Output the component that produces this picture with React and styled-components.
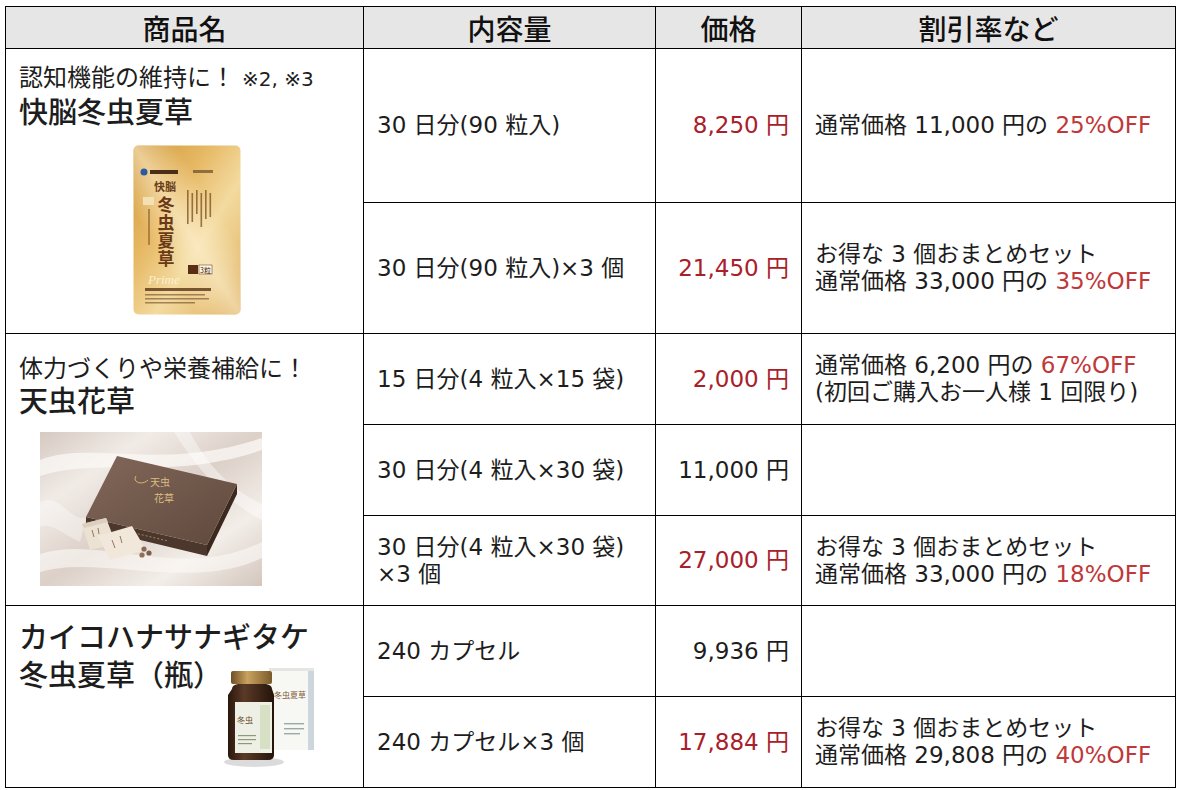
import React from 'react';
import styled, { createGlobalStyle } from 'styled-components';

const GlobalStyle = createGlobalStyle`
  html, body {
    margin: 0;
    padding: 0;
    background: #fff;
  }
  body {
    font-family: "DejaVu Sans", "Noto Sans CJK JP", sans-serif;
    color: #1d1d1d;
  }
`;

const Sheet = styled.div`
  padding: 6px 0 0 5px;
`;

const Table = styled.table`
  border-collapse: collapse;
  table-layout: fixed;
  width: 1170px;
`;

const Col = styled.col`
  width: ${p => p.$w}px;
`;

const Row = styled.tr`
  height: ${p => p.$h}px;
`;

const HeadCell = styled.th`
  background: #e7e6e6;
  border: 1px solid #000;
  padding: 0;
  text-align: center;
  font-family: "Noto Sans CJK JP", sans-serif;
  font-size: 28px;
  font-weight: 500;
  color: #111;
`;

const Cell = styled.td`
  border: 1px solid #000;
  padding: 0 13px;
  font-size: 23px;
  line-height: 27px;
  vertical-align: middle;
  white-space: nowrap;
`;

const ProductCell = styled(Cell)`
  vertical-align: top;
  padding: ${p => p.$pad}px 0 0 13px;
`;

const PriceCell = styled(Cell)`
  text-align: right;
  padding-right: 12px;
  color: ${p => (p.$red ? '#a8202a' : '#1d1d1d')};
`;

const Off = styled.span`
  color: #c0383a;
`;

const Catch = styled.div`
  font-family: "Noto Sans CJK JP", sans-serif;
  font-size: 24px;
  line-height: 28px;
`;

const Note = styled.span`
  margin-left: 7px;
  font-family: "DejaVu Sans", "Noto Sans CJK JP", sans-serif;
  font-size: 20px;
`;

const Name = styled.div`
  margin-top: ${p => p.$top || 0}px;
  font-family: "Noto Sans CJK JP", sans-serif;
  font-size: 29px;
  font-weight: 500;
  line-height: ${p => p.$lh || 32}px;
`;

const NameRow = styled.div`
  display: flex;
  align-items: flex-start;
`;

const Art = styled.div`
  display: flex;
  margin: ${p => p.$m};
  line-height: 0;
`;

const PouchArt = () => (
  <svg width="108" height="170" viewBox="0 0 108 170">
    <defs>
      <linearGradient id="pouchGold" x1="0" y1="0" x2="1" y2="1">
        <stop offset="0" stopColor="#d09638" />
        <stop offset="0.35" stopColor="#e6b965" />
        <stop offset="0.6" stopColor="#f3da9f" />
        <stop offset="0.8" stopColor="#e9c57e" />
        <stop offset="1" stopColor="#d7a24d" />
      </linearGradient>
      <linearGradient id="pouchSheen" x1="1" y1="0" x2="0" y2="1">
        <stop offset="0.3" stopColor="#fff6dc" stopOpacity="0" />
        <stop offset="0.5" stopColor="#fff6dc" stopOpacity="0.55" />
        <stop offset="0.7" stopColor="#fff6dc" stopOpacity="0" />
      </linearGradient>
    </defs>
    <rect x="0.5" y="0.5" width="107" height="169" rx="5" fill="url(#pouchGold)" />
    <rect x="0.5" y="0.5" width="107" height="169" rx="5" fill="url(#pouchSheen)" />
    <circle cx="11" cy="27" r="3.5" fill="#2d5c9e" />
    <rect x="17" y="25" width="28" height="4" fill="#4a2e16" />
    <rect x="60" y="25" width="20" height="3" fill="#6b4a28" opacity="0.7" />
    <text x="21" y="46" fontSize="11" fontWeight="700" fill="#6b3e18" fontFamily="'Noto Sans CJK JP', sans-serif">快脳</text>
    <rect x="10" y="52" width="11" height="8" fill="#f3e0b4" />
    <rect x="15" y="64" width="2" height="36" fill="#8a5a2a" opacity="0.6" />
    <text x="33" y="51" fontSize="17" fontWeight="700" letterSpacing="1" fill="#6a3a16" fontFamily="'Noto Sans CJK JP', sans-serif" style={{ writingMode: 'vertical-rl' }}>冬虫夏草</text>
    {[0, 1, 2, 3, 4, 5].map(i => (
      <rect key={i} x={54 + i * 4.5} y={45 + (i % 2) * 3} width="1.6" height={34 - (i % 3) * 5} fill="#7a4c22" opacity="0.75" />
    ))}
    <text x="15" y="139" fontSize="13" fontStyle="italic" fill="#fbefd0" fontFamily="'Liberation Serif', serif">Prime</text>
    <rect x="55" y="120" width="10" height="9" fill="#5a2e14" />
    <rect x="66" y="120" width="13" height="9" fill="#fff8ea" stroke="#7a4c22" strokeWidth="0.6" />
    <text x="72.5" y="127.5" fontSize="7" textAnchor="middle" fill="#3a2010" fontFamily="'Noto Sans CJK JP', sans-serif">3粒</text>
    <rect x="12" y="143" width="66" height="3" fill="#5a3418" opacity="0.8" />
    <rect x="12" y="149" width="60" height="1.5" fill="#6b4a28" opacity="0.6" />
    <rect x="12" y="153" width="64" height="1.5" fill="#6b4a28" opacity="0.6" />
    <rect x="12" y="157" width="50" height="1.5" fill="#6b4a28" opacity="0.6" />
  </svg>
);

const GiftBoxArt = () => (
  <svg width="222" height="154" viewBox="0 0 222 154">
    <defs>
      <linearGradient id="satin" x1="0" y1="0" x2="1" y2="1">
        <stop offset="0" stopColor="#d6cac2" />
        <stop offset="0.25" stopColor="#f1ebe6" />
        <stop offset="0.5" stopColor="#dcd0c8" />
        <stop offset="0.75" stopColor="#f3eee9" />
        <stop offset="1" stopColor="#d3c6bd" />
      </linearGradient>
      <linearGradient id="lid" x1="0" y1="0" x2="1" y2="1">
        <stop offset="0" stopColor="#82685b" />
        <stop offset="1" stopColor="#5f483c" />
      </linearGradient>
    </defs>
    <rect width="222" height="154" fill="url(#satin)" />
    <path d="M0 28 C50 8 120 40 222 6 L222 18 C130 50 60 24 0 44 Z" fill="#fbf8f5" opacity="0.75" />
    <path d="M0 122 C60 102 140 150 222 110 L222 126 C150 160 60 122 0 140 Z" fill="#fbf8f5" opacity="0.65" />
    <path d="M150 0 C170 40 200 62 222 72 L222 88 C190 72 160 42 134 0 Z" fill="#fff" opacity="0.4" />
    <path d="M0 70 C20 60 30 90 46 86 L40 110 C20 100 10 90 0 95 Z" fill="#fff" opacity="0.35" />
    <polygon points="46,85 167,113 167,124 46,95" fill="#4c372c" />
    <polygon points="167,113 197,52 197,62 167,124" fill="#3b291f" />
    <polygon points="77,24 197,52 167,113 46,85" fill="url(#lid)" />
    <path d="M96 44 C92 50 102 54 108 48" stroke="#d8b878" strokeWidth="1" fill="none" />
    <text x="110" y="54" fontSize="10" fill="#dcbd82" fontFamily="'Noto Sans CJK JP', sans-serif">天虫</text>
    <text x="114" y="70" fontSize="10" fill="#dcbd82" fontFamily="'Noto Sans CJK JP', sans-serif">花草</text>
    <line x1="90" y1="100" x2="128" y2="109" stroke="#b89a78" strokeWidth="0.8" strokeDasharray="2 2" />
    <polygon points="42,92 66,86 76,112 50,118" fill="#ece2d3" />
    <polygon points="42,92 66,86 68,90 44,96" fill="#dccfbd" />
    <polygon points="58,104 92,94 106,118 70,128" fill="#f1e8db" />
    <path d="M72 108 l3 8 M80 104 l2 7" stroke="#8a6b50" strokeWidth="0.9" />
    <path d="M52 98 l2 7 M58 96 l1 6" stroke="#8a6b50" strokeWidth="0.9" />
    <circle cx="104" cy="117" r="2.6" fill="#8a6a55" />
    <circle cx="109" cy="121" r="2.6" fill="#7c5e4a" />
    <circle cx="102" cy="123" r="2.6" fill="#8f705b" />
  </svg>
);

const BottleArt = () => (
  <svg width="96" height="104" viewBox="0 0 96 104">
    <defs>
      <linearGradient id="glass" x1="0" x2="1">
        <stop offset="0" stopColor="#2a170d" />
        <stop offset="0.35" stopColor="#5a3a26" />
        <stop offset="1" stopColor="#24130a" />
      </linearGradient>
      <linearGradient id="cap" x1="0" x2="1">
        <stop offset="0" stopColor="#6f4f24" />
        <stop offset="0.4" stopColor="#c9a25e" />
        <stop offset="1" stopColor="#7a5a2a" />
      </linearGradient>
    </defs>
    <rect x="47" y="3" width="45" height="82" fill="#f7f7f3" />
    <rect x="86" y="3" width="6" height="82" fill="#cdd6dc" />
    <rect x="47" y="3" width="45" height="3" fill="#e3e6e2" />
    <text x="52" y="33" fontSize="8" fill="#7a5a3a" fontFamily="'Noto Sans CJK JP', sans-serif">冬虫夏草</text>
    <rect x="62" y="58" width="20" height="1.4" fill="#9aa" />
    <rect x="62" y="63" width="20" height="1.4" fill="#9aa" />
    <rect x="62" y="68" width="16" height="1.4" fill="#9aa" />
    <ellipse cx="32" cy="97" rx="30" ry="5" fill="#000" opacity="0.14" />
    <path d="M10 24 Q10 20 16 19 L44 19 Q50 20 50 24 L52 30 L52 90 Q52 95 46 95 L12 95 Q6 95 6 90 L6 30 Z" fill="url(#glass)" />
    <rect x="9" y="6" width="41" height="13" rx="2" fill="url(#cap)" />
    <rect x="13" y="37" width="37" height="51" fill="#eef0e6" />
    <rect x="38" y="40" width="10" height="44" fill="#d7dfc4" />
    <text x="15" y="58" fontSize="8" fill="#6a4a2a" fontFamily="'Noto Sans CJK JP', sans-serif">冬虫</text>
    <rect x="16" y="70" width="18" height="1.2" fill="#8a9a7a" />
    <rect x="16" y="74" width="18" height="1.2" fill="#8a9a7a" />
    <rect x="16" y="78" width="14" height="1.2" fill="#8a9a7a" />
  </svg>
);

const groups = [
  {
    key: 'kaino',
    pad: 13,
    nameTop: 1,
    catchCopy: '認知機能の維持に！',
    note: '※2, ※3',
    name: ['快脳冬虫夏草'],
    art: <Art $m="19px 0 0 114px"><PouchArt /></Art>,
    rows: [
      { h: 154, qty: ['30 日分(90 粒入)'], price: '8,250 円', red: true, info: [{ t: '通常価格 11,000 円の ', off: '25%OFF' }] },
      { h: 131, qty: ['30 日分(90 粒入)×3 個'], price: '21,450 円', red: true, info: [{ t: 'お得な 3 個おまとめセット' }, { t: '通常価格 33,000 円の ', off: '35%OFF' }] },
    ],
  },
  {
    key: 'tenchu',
    pad: 19,
    nameTop: 2,
    catchCopy: '体力づくりや栄養補給に！',
    name: ['天虫花草'],
    art: <Art $m="17px 0 0 21px"><GiftBoxArt /></Art>,
    rows: [
      { h: 91, qty: ['15 日分(4 粒入×15 袋)'], price: '2,000 円', red: true, info: [{ t: '通常価格 6,200 円の ', off: '67%OFF' }, { t: '(初回ご購入お一人様 1 回限り)' }] },
      { h: 91, qty: ['30 日分(4 粒入×30 袋)'], price: '11,000 円', red: false, info: [] },
      { h: 90, qty: ['30 日分(4 粒入×30 袋)', '×3 個'], price: '27,000 円', red: true, info: [{ t: 'お得な 3 個おまとめセット' }, { t: '通常価格 33,000 円の ', off: '18%OFF' }] },
    ],
  },
  {
    key: 'kaiko',
    pad: 10,
    name: ['カイコハナサナギタケ', '冬虫夏草（瓶）'],
    rows: [
      { h: 91, qty: ['240 カプセル'], price: '9,936 円', red: false, info: [] },
      { h: 91, qty: ['240 カプセル×3 個'], price: '17,884 円', red: true, info: [{ t: 'お得な 3 個おまとめセット' }, { t: '通常価格 29,808 円の ', off: '40%OFF' }] },
    ],
  },
];

const Product = ({ g }) => {
  if (g.key === 'kaiko') {
    return (
      <>
        <Name $lh={38}>{g.name[0]}</Name>
        <NameRow>
          <Name $lh={38}>{g.name[1]}</Name>
          <Art $m="11px 52px 0 auto"><BottleArt /></Art>
        </NameRow>
      </>
    );
  }
  return (
    <>
      <Catch>
        {g.catchCopy}
        {g.note && <Note>{g.note}</Note>}
      </Catch>
      <Name $top={g.nameTop}>{g.name[0]}</Name>
      {g.art}
    </>
  );
};

const Lines = ({ items }) =>
  items.map((line, i) => (
    <div key={i}>
      {line.t}
      {line.off && <Off>{line.off}</Off>}
    </div>
  ));

const App = () => (
  <>
    <GlobalStyle />
    <Sheet>
      <Table>
        <colgroup>
          <Col $w={358} />
          <Col $w={292} />
          <Col $w={146} />
          <Col $w={374} />
        </colgroup>
        <thead>
          <Row $h={42}>
            <HeadCell>商品名</HeadCell>
            <HeadCell>内容量</HeadCell>
            <HeadCell>価格</HeadCell>
            <HeadCell>割引率など</HeadCell>
          </Row>
        </thead>
        <tbody>
          {groups.map(g =>
            g.rows.map((r, i) => (
              <Row key={`${g.key}-${i}`} $h={r.h}>
                {i === 0 && (
                  <ProductCell rowSpan={g.rows.length} $pad={g.pad}>
                    <Product g={g} />
                  </ProductCell>
                )}
                <Cell>{r.qty.map(q => <div key={q}>{q}</div>)}</Cell>
                <PriceCell $red={r.red}>{r.price}</PriceCell>
                <Cell>
                  <Lines items={r.info} />
                </Cell>
              </Row>
            ))
          )}
        </tbody>
      </Table>
    </Sheet>
  </>
);

export default App;
